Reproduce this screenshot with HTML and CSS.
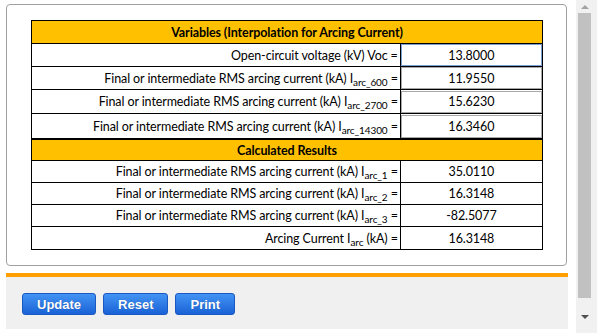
FILE: index.html
```html
<!DOCTYPE html>
<html>
<head>
  <title>Arcing Current Interpolation</title>
  <link rel="stylesheet" href="styles.css">
</head>
<body>
  <div class="page">
    <div class="card">
      <table class="calc">
        <tbody>
          <tr class="head">
            <td colspan="2">Variables (Interpolation for Arcing Current)</td>
          </tr>
          <tr class="first">
            <td class="label">Open-circuit voltage (kV) Voc =</td>
            <td class="value"><input class="active" type="text" value="13.8000" /></td>
          </tr>
          <tr class="first">
            <td class="label">Final or intermediate RMS arcing current (kA) I<sub>arc_600</sub> =</td>
            <td class="value"><input type="text" value="11.9550" /></td>
          </tr>
          <tr>
            <td class="label">Final or intermediate RMS arcing current (kA) I<sub>arc_2700</sub> =</td>
            <td class="value"><input type="text" value="15.6230" /></td>
          </tr>
          <tr class="tall">
            <td class="label">Final or intermediate RMS arcing current (kA) I<sub>arc_14300</sub> =</td>
            <td class="value"><input type="text" value="16.3460" /></td>
          </tr>
          <tr class="head second">
            <td colspan="2">Calculated Results</td>
          </tr>
          <tr class="result">
            <td class="label">Final or intermediate RMS arcing current (kA) I<sub>arc_1</sub> =</td>
            <td class="number">35.0110</td>
          </tr>
          <tr class="result">
            <td class="label">Final or intermediate RMS arcing current (kA) I<sub>arc_2</sub> =</td>
            <td class="number">16.3148</td>
          </tr>
          <tr class="result">
            <td class="label">Final or intermediate RMS arcing current (kA) I<sub>arc_3</sub> =</td>
            <td class="number">-82.5077</td>
          </tr>
          <tr class="result last">
            <td class="label">Arcing Current I<sub>arc</sub> (kA) =</td>
            <td class="number">16.3148</td>
          </tr>
        </tbody>
      </table>
    </div>
    <div class="divider"></div>
    <div class="actions">
      <button type="button">Update</button>
      <button type="button">Reset</button>
      <button type="button">Print</button>
    </div>
  </div>
  <div class="scrollbar">
    <span class="arrow up"></span>
    <span class="thumb"></span>
    <span class="arrow down"></span>
  </div>
</body>
</html>
```

FILE: styles.css
```css
body {
  margin: 0;
  display: flex;
  height: 333px;
  overflow: hidden;
  background-color: #fff;
  font-family: Lato, "Open Sans", sans-serif;
}

.page {
  width: 576px;
  padding: 4px 0 0 6px;
  box-sizing: border-box;
}

.card {
  width: 561px;
  box-sizing: border-box;
  border: 1px solid #a0a0a0;
  border-radius: 4px;
  padding: 15px 23px 15px 24px;
}

table.calc {
  width: 512px;
  border-collapse: collapse;
  border: 1px solid #000;
  font-size: 12.5px;
  letter-spacing: -0.1px;
  color: #000;
}

.calc td {
  border: 1px solid #000;
  padding: 0;
  height: 23px;
}

.calc tr.head td {
  background-color: #ffc000;
  font-weight: bold;
  text-align: center;
  height: 22px;
}

.calc tr.first td {
  height: 22px;
}

.calc tr.tall td {
  height: 24px;
}

.calc tr.second td {
  border-top: 2px solid #000;
  height: 20px;
}

.calc tr.result td {
  height: 21px;
}

.calc tr.last td {
  height: 22px;
}

.calc td.label {
  width: 367px;
  text-align: right;
  padding-right: 2px;
  white-space: nowrap;
}

.calc sub {
  font-size: 10px;
  vertical-align: -3px;
  line-height: 0;
}

.calc td.value {
  width: 143px;
}

.calc td.value input {
  display: block;
  width: 100%;
  height: 22px;
  box-sizing: border-box;
  margin: 0;
  border: 1px solid #a8a8a8;
  font-family: Lato, "Open Sans", sans-serif;
  font-size: 12.5px;
  color: #000;
  text-align: center;
  outline: none;
}

.calc tr.tall td.value input {
  height: 23px;
}

.calc td.value input.active {
  border-color: #7a9fd6;
}

.calc td.number {
  text-align: center;
}

.divider {
  width: 562px;
  height: 4px;
  margin-top: 7px;
  background-color: #ffa000;
}

.actions {
  width: 562px;
  height: 52px;
  box-sizing: border-box;
  background-color: #f0f0f0;
  padding: 16px 0 0 16px;
  display: flex;
  align-items: flex-start;
  gap: 7px;
}

.actions button {
  height: 22px;
  padding: 0 14px;
  border: 1px solid #1a58c4;
  border-radius: 3px;
  background: linear-gradient(#4294f4, #1a62d6);
  color: #fff;
  font-family: "Liberation Sans", Arial, sans-serif;
  font-size: 13px;
  font-weight: bold;
  text-shadow: 0 0 1px rgba(0, 0, 0, 0.3);
  cursor: pointer;
}

.scrollbar {
  width: 21px;
  height: 333px;
  background-color: #f1f1f1;
  display: flex;
  flex-direction: column;
  align-items: center;
  padding-right: 4px;
  box-sizing: border-box;
}

.scrollbar .thumb {
  width: 13px;
  height: 285px;
  background-color: #c1c1c1;
  margin-top: 4px;
}

.scrollbar .arrow {
  width: 0;
  height: 0;
  border-left: 4px solid transparent;
  border-right: 4px solid transparent;
}

.scrollbar .up {
  margin-top: 5px;
  border-bottom: 4px solid #a3a3a3;
}

.scrollbar .down {
  margin-top: 17px;
  border-top: 4px solid #505050;
}
```
